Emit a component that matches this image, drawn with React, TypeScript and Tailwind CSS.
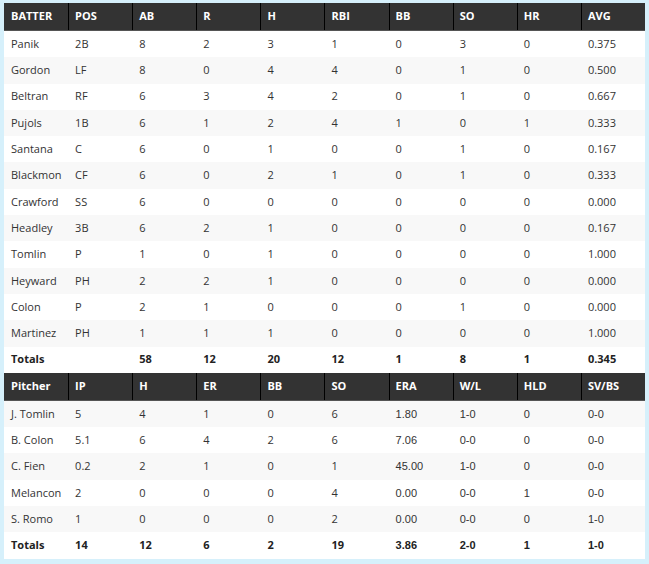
const batterHead = ['BATTER', 'POS', 'AB', 'R', 'H', 'RBI', 'BB', 'SO', 'HR', 'AVG'];
const batters = [
  ['Panik', '2B', '8', '2', '3', '1', '0', '3', '0', '0.375'],
  ['Gordon', 'LF', '8', '0', '4', '4', '0', '1', '0', '0.500'],
  ['Beltran', 'RF', '6', '3', '4', '2', '0', '1', '0', '0.667'],
  ['Pujols', '1B', '6', '1', '2', '4', '1', '0', '1', '0.333'],
  ['Santana', 'C', '6', '0', '1', '0', '0', '1', '0', '0.167'],
  ['Blackmon', 'CF', '6', '0', '2', '1', '0', '1', '0', '0.333'],
  ['Crawford', 'SS', '6', '0', '0', '0', '0', '0', '0', '0.000'],
  ['Headley', '3B', '6', '2', '1', '0', '0', '0', '0', '0.167'],
  ['Tomlin', 'P', '1', '0', '1', '0', '0', '0', '0', '1.000'],
  ['Heyward', 'PH', '2', '2', '1', '0', '0', '0', '0', '0.000'],
  ['Colon', 'P', '2', '1', '0', '0', '0', '1', '0', '0.000'],
  ['Martinez', 'PH', '1', '1', '1', '0', '0', '0', '0', '1.000'],
];
const batterTotals = ['Totals', '', '58', '12', '20', '12', '1', '8', '1', '0.345'];

const pitcherHead = ['Pitcher', 'IP', 'H', 'ER', 'BB', 'SO', 'ERA', 'W/L', 'HLD', 'SV/BS'];
const pitchers = [
  ['J. Tomlin', '5', '4', '1', '0', '6', '1.80', '1-0', '0', '0-0'],
  ['B. Colon', '5.1', '6', '4', '2', '6', '7.06', '0-0', '0', '0-0'],
  ['C. Fien', '0.2', '2', '1', '0', '1', '45.00', '1-0', '0', '0-0'],
  ['Melancon', '2', '0', '0', '0', '4', '0.00', '0-0', '1', '0-0'],
  ['S. Romo', '1', '0', '0', '0', '2', '0.00', '0-0', '0', '1-0'],
];
const pitcherTotals = ['Totals', '14', '12', '6', '2', '19', '3.86', '2-0', '1', '1-0'];

function HeadRow({ cells }: { cells: string[] }) {
  return (
    <div className="grid grid-cols-10 h-[28px] bg-[#333333] border-b border-[#555]">
      {cells.map((c, i) => (
        <div
          key={i}
          className={`flex items-center text-white font-bold text-[11px] ${i > 0 ? 'border-l border-black pl-[6px]' : 'pl-[7px]'}`}
        >
          {c}
        </div>
      ))}
    </div>
  );
}

function Row({ cells, gray, bold, arialFrom }: { cells: string[]; gray?: boolean; bold?: boolean; arialFrom?: number }) {
  return (
    <div className={`grid grid-cols-10 h-[26.3px] ${gray ? 'bg-[#f8f8f8]' : 'bg-white'}`}>
      {cells.map((c, i) => (
        <div
          key={i}
          className={`flex items-center pl-[7px] text-[11px] ${bold ? 'font-bold text-[#222]' : 'text-[#333]'} ${
            arialFrom !== undefined && i >= arialFrom ? "font-['Liberation_Sans',Arial,sans-serif]" : ''
          }`}
        >
          {c}
        </div>
      ))}
    </div>
  );
}

export default function App() {
  return (
    <div className="w-[649px] h-[564px] bg-[#d6f0fb] pt-[3px] px-[4px] font-['Open_Sans',sans-serif]">
      <div className="flex flex-col">
        <HeadRow cells={batterHead} />
        {batters.map((r, i) => (
          <Row key={r[0]} cells={r} gray={i % 2 === 1} />
        ))}
        <Row cells={batterTotals} bold />
        <HeadRow cells={pitcherHead} />
        {pitchers.map((r, i) => (
          <Row key={r[0]} cells={r} gray={i % 2 === 0} arialFrom={6} />
        ))}
        <Row cells={pitcherTotals} bold arialFrom={6} />
      </div>
    </div>
  );
}
